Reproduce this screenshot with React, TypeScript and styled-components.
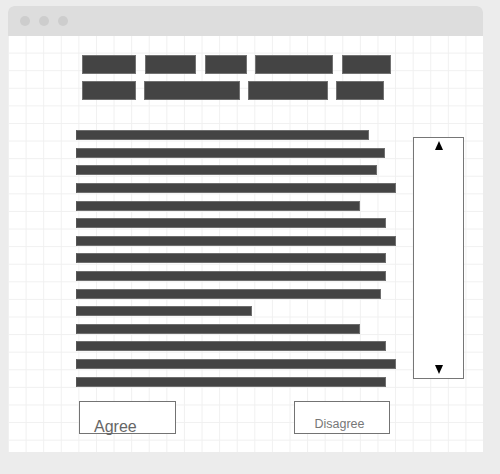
import React from "react";
import styled, { createGlobalStyle } from "styled-components";

const GlobalStyle = createGlobalStyle`
  html, body {
    margin: 0;
    padding: 0;
    background: #ececec;
    font-family: "Liberation Sans", Arial, sans-serif;
  }
`;

const navRows: { gap: number; widths: number[] }[] = [
  { gap: 8.5, widths: [54, 51.5, 42, 78, 49] },
  { gap: 8, widths: [54, 95.5, 80, 48] },
];

const lineWidths = [
  293, 309, 301, 320, 284, 310, 320, 310, 310, 305, 176, 284, 310, 320, 310,
];

const App: React.FC = () => {
  return (
    <Page>
      <GlobalStyle />
      <Window>
        <TitleBar>
          <Dot />
          <Dot />
          <Dot />
        </TitleBar>
        <Body>
          <Nav>
            {navRows.map((row, i) => (
              <NavRow key={i} $gap={row.gap}>
                {row.widths.map((w, j) => (
                  <NavItem key={j} $width={w} />
                ))}
              </NavRow>
            ))}
          </Nav>
          <Main>
            <TextBlock>
              {lineWidths.map((w, i) => (
                <TextLine key={i} $width={w} />
              ))}
            </TextBlock>
            <ScrollBox>
              <ArrowUp />
              <ArrowDown />
            </ScrollBox>
          </Main>
          <Buttons>
            <AgreeButton>Agree</AgreeButton>
            <DisagreeButton>Disagree</DisagreeButton>
          </Buttons>
        </Body>
      </Window>
    </Page>
  );
};

export default App;

const Page = styled.div`
  width: 500px;
  height: 474px;
  box-sizing: border-box;
  padding: 6px 17px 22px 8px;
`;

const Window = styled.div`
  width: 475px;
  height: 446px;
  display: flex;
  flex-direction: column;
  border-radius: 6px 6px 0 0;
  overflow: hidden;
  background: #fff;
`;

const TitleBar = styled.div`
  height: 30px;
  flex-shrink: 0;
  background: #dddddd;
  display: flex;
  align-items: center;
  gap: 9px;
  padding-left: 12px;
`;

const Dot = styled.span`
  width: 10px;
  height: 10px;
  border-radius: 50%;
  background: #cdcdcd;
`;

const Body = styled.div`
  flex: 1;
  box-sizing: border-box;
  padding-top: 19px;
  background-color: #fff;
  background-image: linear-gradient(to right, #f0f0f0 1px, transparent 1px),
    linear-gradient(to bottom, #f0f0f0 1px, transparent 1px);
  background-size: 17.6px 17.6px;
  background-position: 0 -1px;
`;

const Nav = styled.div`
  display: flex;
  flex-direction: column;
  gap: 7px;
  padding-left: 74px;
`;

const NavRow = styled.div<{ $gap: number }>`
  display: flex;
  gap: ${(p) => p.$gap}px;
`;

const NavItem = styled.div<{ $width: number }>`
  width: ${(p) => p.$width}px;
  height: 19px;
  box-sizing: border-box;
  background: #444;
  border: 1px solid #727272;
`;

const Main = styled.div`
  display: flex;
  align-items: flex-start;
  margin-top: 30px;
  padding-left: 68px;
`;

const TextBlock = styled.div`
  width: 320px;
  display: flex;
  flex-direction: column;
  gap: 7.6px;
  padding-top: 0.3px;
`;

const TextLine = styled.div<{ $width: number }>`
  width: ${(p) => p.$width}px;
  height: 10px;
  box-sizing: border-box;
  background: #444;
  border: 1px solid #6e6e6e;
  border-left-color: #555;
`;

const ScrollBox = styled.div`
  width: 51px;
  height: 242px;
  box-sizing: border-box;
  margin-left: 17px;
  margin-top: 7px;
  border: 1px solid #767676;
  background: #fff;
  display: flex;
  flex-direction: column;
  align-items: center;
  justify-content: space-between;
  padding: 3px 0 4px 1px;
`;

const ArrowUp = styled.span`
  width: 0;
  height: 0;
  border-left: 4.5px solid transparent;
  border-right: 4.5px solid transparent;
  border-bottom: 9px solid #000;
`;

const ArrowDown = styled.span`
  width: 0;
  height: 0;
  border-left: 4.5px solid transparent;
  border-right: 4.5px solid transparent;
  border-top: 9px solid #000;
`;

const Buttons = styled.div`
  display: flex;
  gap: 118px;
  margin-top: 14.5px;
  padding-left: 71px;
`;

const BaseButton = styled.div`
  height: 33px;
  width: 97px;
  box-sizing: border-box;
  border: 1px solid #737373;
  background: #fff;
  white-space: nowrap;
`;

const AgreeButton = styled(BaseButton)`
  font-size: 16px;
  color: #666;
  padding: 16px 0 0 14px;
`;

const DisagreeButton = styled(BaseButton)`
  width: 96px;
  font-size: 12.5px;
  color: #777;
  text-align: center;
  padding: 14.5px 5px 0 0;
`;
